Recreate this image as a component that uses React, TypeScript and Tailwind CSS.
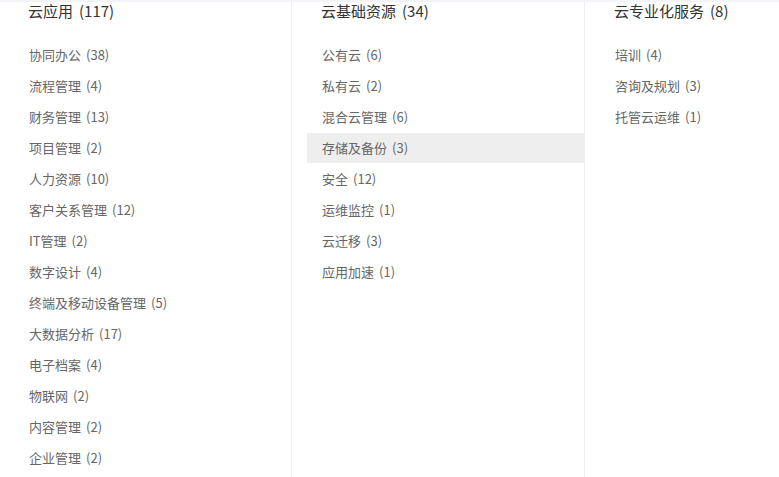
const columns = [
  {
    title: "云应用",
    count: 117,
    items: [
      ["协同办公", 38],
      ["流程管理", 4],
      ["财务管理", 13],
      ["项目管理", 2],
      ["人力资源", 10],
      ["客户关系管理", 12],
      ["IT管理", 2],
      ["数字设计", 4],
      ["终端及移动设备管理", 5],
      ["大数据分析", 17],
      ["电子档案", 4],
      ["物联网", 2],
      ["内容管理", 2],
      ["企业管理", 2],
    ],
  },
  {
    title: "云基础资源",
    count: 34,
    items: [
      ["公有云", 6],
      ["私有云", 2],
      ["混合云管理", 6],
      ["存储及备份", 3],
      ["安全", 12],
      ["运维监控", 1],
      ["云迁移", 3],
      ["应用加速", 1],
    ],
  },
  {
    title: "云专业化服务",
    count: 8,
    items: [
      ["培训", 4],
      ["咨询及规划", 3],
      ["托管云运维", 1],
    ],
  },
] as const;

export default function App() {
  return (
    <div
      className="w-[779px] h-[477px] overflow-hidden bg-white border-t-2 border-[#f2f4f8]"
      style={{ fontFamily: '"Noto Sans CJK SC", "Noto Sans", sans-serif' }}
    >
      <div className="flex h-full">
        {columns.map((col, ci) => (
          <div
            key={col.title}
            className={
              ci === 0
                ? "w-[292px] h-full border-r border-[#eeeeee]"
                : ci === 1
                ? "w-[293px] h-full border-r border-[#eeeeee]"
                : "flex-1 h-full"
            }
          >
            {/* Column header */}
            <div
              className={
                "h-[18px] leading-[18px] text-[15px] text-[#333333] " +
                (ci === 0 ? "pl-[28px]" : "pl-[29px]")
              }
            >
              {col.title}
              <span className="ml-[6px]">({col.count})</span>
            </div>

            {/* Category list */}
            <ul className={"mt-[20px] flex flex-col gap-[1px] " + (ci === 0 ? "pl-[14px]" : "pl-[15px]")}>
              {col.items.map(([name, n]) => (
                <li
                  key={name}
                  className={
                    "h-[30px] leading-[30px] pl-[15px] text-[13px] text-[#666666] " +
                    (name === "存储及备份" ? "bg-[#eeeeee]" : "")
                  }
                >
                  {name}
                  <span className="ml-[5px]">({n})</span>
                </li>
              ))}
            </ul>
          </div>
        ))}
      </div>
    </div>
  );
}
